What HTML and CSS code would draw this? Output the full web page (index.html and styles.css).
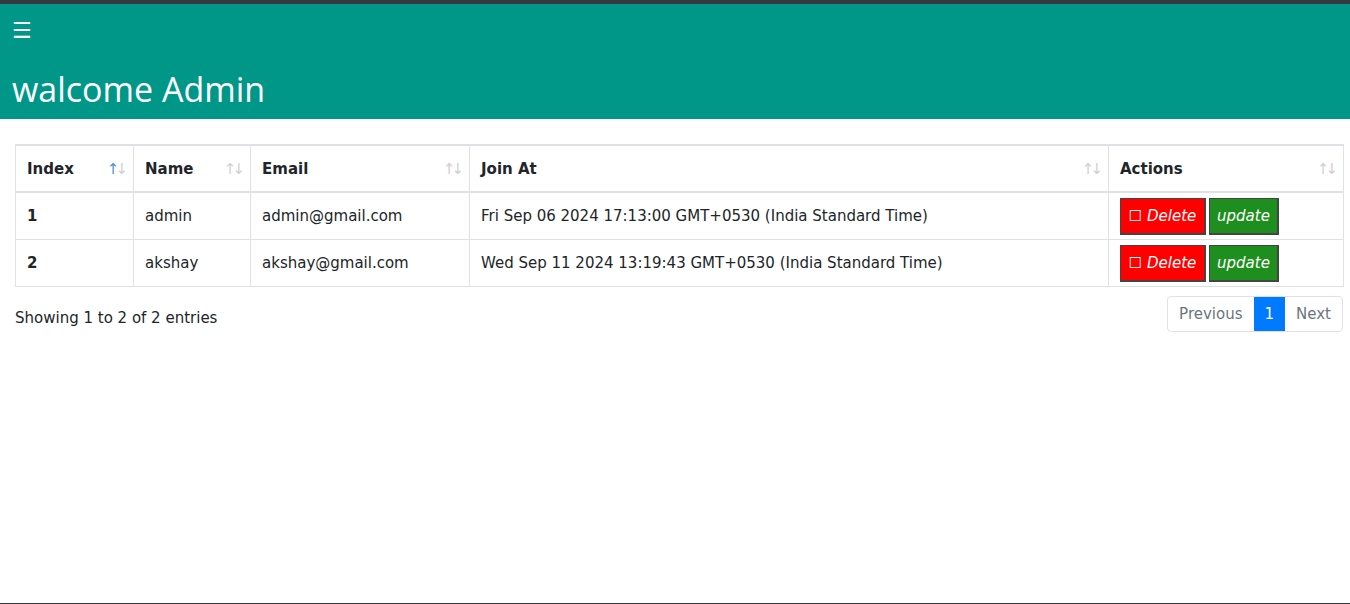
FILE: index.html
```html
<!DOCTYPE html>
<html>
<head>
<meta charset="utf-8">
<link rel="stylesheet" href="styles.css">
</head>
<body>
<div class="topline"></div>
<header class="hero">
  <div class="burger">☰</div>
  <h1 class="title">walcome Admin</h1>
</header>
<main class="content">
  <table class="grid">
    <colgroup>
      <col class="c1"><col class="c2"><col class="c3"><col class="c4"><col class="c5">
    </colgroup>
    <thead>
      <tr>
        <th>Index<span class="sort"><span class="up active">↑</span><span class="dn">↓</span></span></th>
        <th>Name<span class="sort"><span class="up">↑</span><span class="dn">↓</span></span></th>
        <th>Email<span class="sort"><span class="up">↑</span><span class="dn">↓</span></span></th>
        <th>Join At<span class="sort"><span class="up">↑</span><span class="dn">↓</span></span></th>
        <th>Actions<span class="sort"><span class="up">↑</span><span class="dn">↓</span></span></th>
      </tr>
    </thead>
    <tbody>
      <tr>
        <td class="num">1</td>
        <td>admin</td>
        <td>admin@gmail.com</td>
        <td>Fri Sep 06 2024 17:13:00 GMT+0530 (India Standard Time)</td>
        <td class="acts"><button class="btn del">☐ Delete</button><button class="btn upd">update</button></td>
      </tr>
      <tr>
        <td class="num">2</td>
        <td>akshay</td>
        <td>akshay@gmail.com</td>
        <td>Wed Sep 11 2024 13:19:43 GMT+0530 (India Standard Time)</td>
        <td class="acts"><button class="btn del">☐ Delete</button><button class="btn upd">update</button></td>
      </tr>
    </tbody>
  </table>
  <div class="footer-row">
    <div class="info">Showing 1 to 2 of 2 entries</div>
    <div class="pager">
      <span class="pg">Previous</span>
      <span class="pg cur">1</span>
      <span class="pg">Next</span>
    </div>
  </div>
</main>
<div class="bottomline"></div>
</body>
</html>
```
FILE: styles.css
```css
html, body { margin: 0; padding: 0; }
body {
  width: 1350px;
  height: 604px;
  position: relative;
  background: #fff;
  font-family: "DejaVu Sans", Verdana, sans-serif;
  color: #212529;
  overflow: hidden;
}
.topline { height: 4px; background: #343a40; }
.hero {
  background: #009688;
  height: 115px;
  color: #fff;
  padding: 0 12px;
  box-sizing: border-box;
  display: flex;
  flex-direction: column;
}
.burger {
  font-family: "DejaVu Sans", sans-serif;
  font-size: 22px;
  line-height: 22px;
  margin-top: 16px;
  height: 22px;
}
.title {
  margin: 27px 0 0 0;
  font-family: "Open Sans", "Noto Sans", sans-serif;
  font-weight: 400;
  font-size: 34px;
  line-height: 40px;
}
.content { padding: 25px 7px 0 15px; }
.grid {
  width: 1328px;
  border-collapse: collapse;
  table-layout: fixed;
  font-size: 15px;
}
.c1 { width: 118px; }
.c2 { width: 117px; }
.c3 { width: 219px; }
.c4 { width: 639px; }
.c5 { width: 235px; }
.grid th, .grid td {
  border: 1px solid #dee2e6;
  text-align: left;
  padding: 0 11px;
  height: 46px;
  vertical-align: middle;
  white-space: nowrap;
}
.grid thead th {
  font-weight: bold;
  border-bottom: 2px solid #dee2e6;
  border-top: 2px solid #dee2e6;
  position: relative;
  height: 45px;
}
.sort {
  position: absolute;
  right: 9px;
  top: 14px;
  font-size: 15px;
  color: #d0d0d0;
  letter-spacing: -4px;
  font-weight: normal;
}
.sort .active { color: #4a90d9; }
.num { font-weight: bold; }
.btn {
  font-family: "DejaVu Sans", Verdana, sans-serif;
  font-style: italic;
  font-size: 15px;
  color: #fff;
  height: 37px;
  border: 1px solid #444;
  border-right-width: 2px;
  border-bottom-width: 2px;
  padding: 0;
  margin: 0 3px 0 0;
  vertical-align: middle;
  cursor: pointer;
}
.del { background: #ff0000; width: 86px; }
.upd { background: #1e8f1e; width: 70px; }
.footer-row {
  display: flex;
  justify-content: space-between;
  align-items: center;
  margin-top: 9px;
}
.info { font-size: 15px; padding-top: 8px; }
.pager {
  display: flex;
  border: 1px solid #dee2e6;
  border-radius: 4px;
  overflow: hidden;
  font-size: 15px;
  height: 34px;
}
.pg {
  display: flex;
  align-items: center;
  padding: 0 11px;
  color: #6c757d;
}
.pg.cur { background: #007bff; color: #fff; }
.bottomline {
  position: absolute;
  left: 0; right: 0; bottom: 0;
  height: 1px;
  background: #343a40;
}
```
